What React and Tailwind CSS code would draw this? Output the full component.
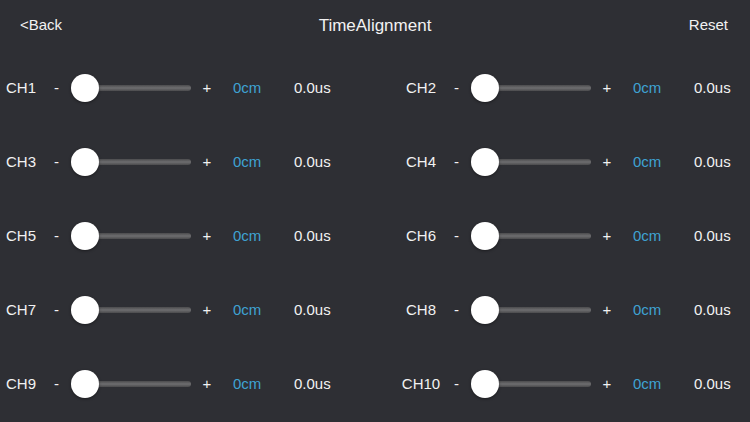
import React from "react";

const font = { fontFamily: '"Liberation Sans", Arial, sans-serif' };

function Cell({ n, wide }) {
  return (
    <div className={`flex items-center h-full ${wide ? "w-[400px]" : "flex-1"}`}>
      <span className="w-[42px] text-center text-[15px] text-[#f2f2f2]">CH{n}</span>
      <span className="w-[29px] text-center text-[15px] text-[#f2f2f2]">-</span>
      <div className="relative w-[120px] h-[28px] flex items-center">
        <div className="ml-[14px] flex-1 h-[6px] rounded-[3px] bg-linear-to-b from-[#4b4b4d] via-[#6e6e70] to-[#4b4b4d]" />
        <div className="absolute left-0 top-0 w-[28px] h-[28px] rounded-full bg-white shadow-[0_1px_3px_rgba(0,0,0,0.4)]" />
      </div>
      <span className="w-[32px] text-center text-[15px] text-[#f2f2f2]">+</span>
      <span className="ml-[10px] w-[61px] text-[15px] text-[#3fa2d2]">0cm</span>
      <span className="text-[15px] text-[#f2f2f2]">0.0us</span>
    </div>
  );
}

export default function App() {
  const rows = [
    [1, 2],
    [3, 4],
    [5, 6],
    [7, 8],
    [9, 10],
  ];
  return (
    <div className="w-[750px] h-[422px] bg-[#2e2f34] overflow-hidden" style={font}>
      <div className="h-[51px] flex items-center justify-between pl-[20px] pr-[22px] relative">
        <span className="text-[15px] text-[#f2f2f2]">&lt;Back</span>
        <span className="absolute left-0 right-0 text-center text-[17px] text-[#f2f2f2] pointer-events-none">TimeAlignment</span>
        <span className="text-[15px] text-[#f2f2f2]">Reset</span>
      </div>
      {rows.map(([a, b]) => (
        <div key={a} className="h-[74px] flex">
          <Cell n={a} wide />
          <Cell n={b} />
        </div>
      ))}
    </div>
  );
}
